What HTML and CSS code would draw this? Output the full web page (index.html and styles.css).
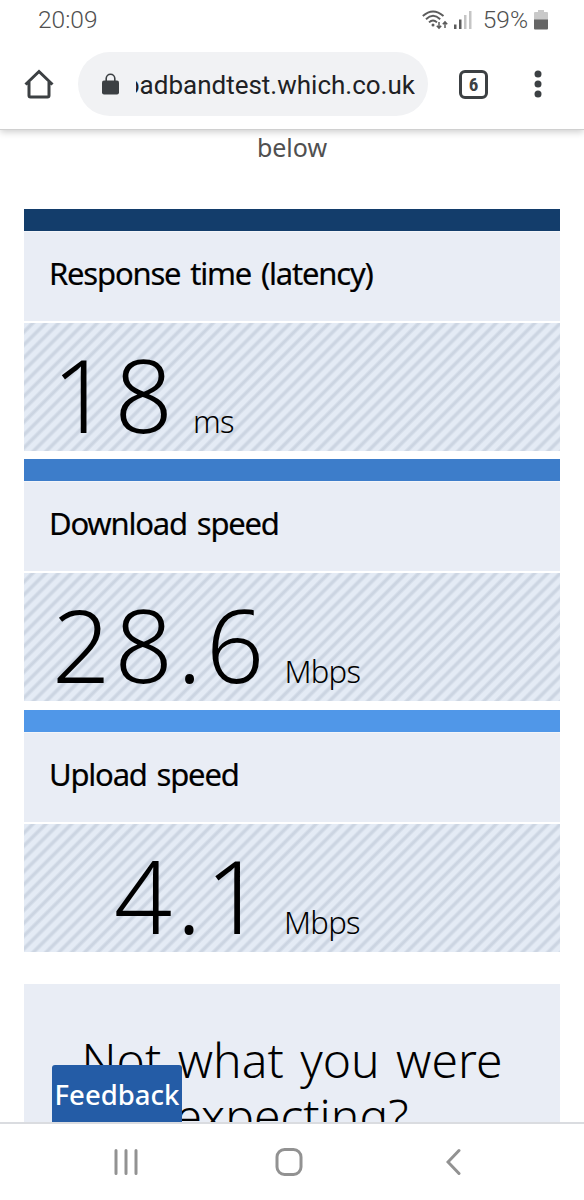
FILE: index.html
```html
<!DOCTYPE html>
<html lang="en">
<head>
    <meta charset="UTF-8">
    <meta name="viewport" content="width=device-width, initial-scale=1.0">
    <title>Broadband speed test</title>
    <link rel="stylesheet" href="styles.css">
</head>
<body>
    <div class="phone">
        <header class="top">
            <div class="status-bar">
                <span class="clock">20:09</span>
                <svg class="wifi" width="26" height="20" viewBox="0 0 26 20" fill="none" stroke="#5c5c5c" stroke-width="1.9">
                    <path d="M.8 6Q11 -3 21.500 6M4 9.200Q11 2.500 18.200 9.200M7 12.400Q11 8.500 15 12.400"/>
                    <circle cx="11" cy="15" r="1.500" fill="#5c5c5c" stroke="none"/>
                    <path d="M17 12v6M14.800 15.700l2.200 2.400 2.200-2.400M23 18v-6M20.800 14.300l2.200-2.400 2.200 2.400" stroke-width="1.500"/>
                </svg>
                <svg class="signal" width="18" height="19" viewBox="0 0 18 19">
                    <path d="M0 14.500h2.500V19H0zM5 9.500h2.500V19H5z" fill="#5c5c5c"/>
                    <path d="M10 5h2.500v14H10zM15 1h2.500v18H15z" fill="#c5c5c5"/>
                </svg>
                <span class="percent">59%</span>
                <svg class="battery" width="14" height="20" viewBox="0 0 14 20">
                    <path d="M4 0h6v2h3q1 0 1 1v7H0V3q0-1 1-1h3z" fill="#c9c9c9"/>
                    <path d="M0 9.500h14V18.500q0 1-1 1H1q-1 0-1-1z" fill="#666"/>
                </svg>
            </div>
            <div class="toolbar">
                <svg class="home" width="30" height="30" viewBox="0 0 30 30" fill="none" stroke="#3c4043" stroke-width="3">
                    <path d="M1.500 15.500L15 2.500l13.500 13M5 13v13.500q0 1.500 1.500 1.500h17q1.500 0 1.500-1.500V13" stroke-linejoin="miter"/>
                </svg>
                <div class="address">
                    <svg class="lock" width="17" height="22" viewBox="0 0 17 22">
                        <path d="M4.200 9V5.500a4.300 4.300 0 0 1 8.600 0V9" fill="none" stroke="#3c4043" stroke-width="1.600"/>
                        <rect y="7.500" width="17" height="14" rx="2" fill="#3c4043"/>
                    </svg>
                    <div class="url"><span>broadbandtest.which.co.uk</span></div>
                </div>
                <div class="tabs">6</div>
                <svg class="menu" width="8" height="28" viewBox="0 0 8 28" fill="#3c4043">
                    <circle cx="4" cy="4" r="3.500"/>
                    <circle cx="4" cy="14" r="3.500"/>
                    <circle cx="4" cy="24" r="3.500"/>
                </svg>
            </div>
        </header>

        <main class="page">
            <p class="intro">below</p>

            <section class="result latency">
                <h2>Response time (latency)</h2>
                <div class="reading"><span class="value">18</span><span class="unit">ms</span></div>
            </section>
            <section class="result download">
                <h2>Download speed</h2>
                <div class="reading"><span class="value">28.6</span><span class="unit">Mbps</span></div>
            </section>
            <section class="result upload">
                <h2>Upload speed</h2>
                <div class="reading"><span class="value">4.1</span><span class="unit">Mbps</span></div>
            </section>

            <section class="advice">
                <div class="line-one">Not what you were</div>
                <div class="line-two">expecting?</div>
            </section>
            <button class="feedback">Feedback</button>
        </main>

        <nav class="nav-bar">
            <svg width="24" height="28" viewBox="0 0 24 28" stroke="#929292" stroke-width="3" stroke-linecap="round">
                <path d="M2 2.500v23M12 2.500v23M22 2.500v23"/>
            </svg>
            <svg width="28" height="28" viewBox="0 0 28 28" fill="none" stroke="#929292" stroke-width="3">
                <rect x="2" y="1.500" width="24" height="25" rx="7.500"/>
            </svg>
            <svg width="15" height="28" viewBox="0 0 15 28" fill="none" stroke="#929292" stroke-width="3" stroke-linecap="round">
                <path d="M13 2.500L2 14l11 11.500"/>
            </svg>
        </nav>
    </div>
</body>
</html>
```
FILE: styles.css
```css
* {
    box-sizing: border-box;
}
body {
    margin: 0;
    background-color: #fff;
    font-family: "Noto Sans", sans-serif;
    color: #000;
}
.phone {
    display: flex;
    flex-direction: column;
    width: 584px;
    height: 1200px;
    overflow: hidden;
}
svg {
    display: block;
    flex: none;
}
.top {
    position: relative;
    z-index: 1;
    height: 130px;
    background-color: #fff;
    border-bottom: 1px solid #d0d0d0;
    box-shadow: 0 2px 7px rgba(0, 0, 0, 0.2);
    font-family: Roboto, sans-serif;
}
.status-bar {
    display: flex;
    align-items: center;
    height: 39px;
    padding: 0 36px 0 38px;
    font-size: 24.5px;
    font-weight: 300;
    color: #505050;
}
.clock {
    margin-right: auto;
}
.signal {
    margin: 0 11px 0 6px;
}
.battery {
    margin-left: 6px;
}
.toolbar {
    display: flex;
    align-items: center;
    height: 90px;
    padding-left: 24px;
}
.address {
    display: flex;
    align-items: center;
    width: 350px;
    height: 64px;
    margin: 0 31px 0 24px;
    padding-left: 24px;
    border-radius: 32px;
    background-color: #f1f2f4;
}
.url {
    display: flex;
    justify-content: flex-end;
    width: 279px;
    margin-left: 17px;
    overflow: hidden;
    font-size: 26px;
    line-height: 32px;
    padding-top: 1px;
    color: #202124;
}
.tabs {
    width: 29px;
    height: 29px;
    border: 3px solid #3c4043;
    border-radius: 6px;
    font-size: 19px;
    font-weight: 700;
    font-stretch: 75%;
    line-height: 24px;
    text-align: center;
    color: #3c4043;
}
.menu {
    margin-left: 46px;
}
.page {
    position: relative;
    height: 992px;
    padding: 0 24px;
    overflow: hidden;
}
.intro {
    height: 78.5px;
    margin: 0;
    font-size: 25px;
    font-weight: 400;
    line-height: 34px;
    text-align: center;
    color: #505050;
}
.result {
    width: 536px;
    height: 242px;
    margin-bottom: 8.5px;
    border-top: 22px solid #133d6b;
}
.download {
    border-top-color: #3d7dca;
}
.upload {
    border-top-color: #5097e8;
}
.result h2 {
    height: 90px;
    margin: 0 0 2px;
    padding-left: 25px;
    background-color: #e9edf5;
    border-top: 1px solid #f3f5f9;
    font-size: 31px;
    font-weight: 400;
    line-height: 83px;
    letter-spacing: -1.2px;
    word-spacing: 3px;
    -webkit-text-stroke: 0.2px #000;
    white-space: nowrap;
}
.reading {
    display: flex;
    align-items: baseline;
    height: 128px;
    padding-left: 28px;
    background: repeating-linear-gradient(135deg, #e4ebf5 0, #e4ebf5 3.5px, #ccd5e2 5.5px, #ccd5e2 7px, #e4ebf5 9.1px);
    white-space: nowrap;
}
.value {
    font-size: 102px;
    font-weight: 300;
    line-height: 142px;
    letter-spacing: 4.2px;
}
.upload .value {
    padding-left: 62px;
}
.unit {
    margin-left: 16px;
    font-size: 31px;
    font-weight: 300;
    letter-spacing: -0.7px;
}
.advice {
    height: 200px;
    margin-top: 32px;
    padding-top: 48px;
    background-color: #e9edf5;
    font-size: 48px;
    font-weight: 300;
    line-height: 56px;
    text-align: center;
    white-space: nowrap;
}
.line-one {
    word-spacing: 4px;
}
.feedback {
    position: absolute;
    left: 52px;
    bottom: 0;
    width: 130px;
    height: 57px;
    padding: 2px 0 0;
    border: none;
    border-radius: 3px 3px 0 0;
    background-color: #245ca6;
    font: 500 27.5px/56px "Noto Sans", sans-serif;
    color: #fff;
}
.nav-bar {
    display: flex;
    align-items: center;
    height: 78px;
    padding-left: 114px;
    border-top: 2px solid #dadce0;
}
.nav-bar svg + svg {
    margin-left: 137px;
}
.nav-bar svg:last-child {
    margin-left: 143px;
}
```
